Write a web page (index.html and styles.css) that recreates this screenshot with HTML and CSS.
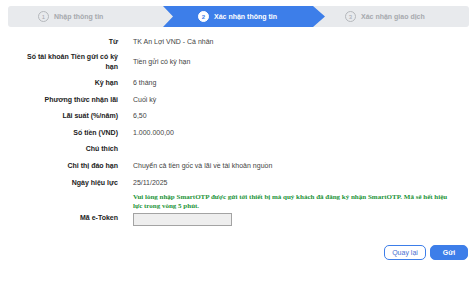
FILE: index.html
```html
<!DOCTYPE html>
<html lang="vi">
<head>
    <meta charset="UTF-8">
    <meta name="viewport" content="width=device-width, initial-scale=1.0">
    <title>Xác nhận thông tin</title>
    <link rel="stylesheet" href="styles.css">
</head>
<body>
    <div class="steps">
        <div class="step step-1">
            <span class="num">1</span>
            <span class="step-label">Nhập thông tin</span>
        </div>
        <div class="step step-2 active">
            <span class="num">2</span>
            <span class="step-label">Xác nhận thông tin</span>
        </div>
        <div class="step step-3">
            <span class="num">3</span>
            <span class="step-label">Xác nhận giao dịch</span>
        </div>
    </div>

    <div class="form">
        <div class="label">Từ</div>
        <div class="value">TK An Lợi VND - Cá nhân</div>

        <div class="label label-wrap">Số tài khoản Tiền gửi có kỳ hạn</div>
        <div class="value">Tiền gửi có kỳ hạn</div>

        <div class="label">Kỳ hạn</div>
        <div class="value">6 tháng</div>

        <div class="label">Phương thức nhận lãi</div>
        <div class="value">Cuối kỳ</div>

        <div class="label">Lãi suất (%/năm)</div>
        <div class="value">6,50</div>

        <div class="label">Số tiền (VND)</div>
        <div class="value">1.000.000,00</div>

        <div class="label">Chú thích</div>
        <div class="value"></div>

        <div class="label">Chỉ thị đáo hạn</div>
        <div class="value">Chuyển cả tiền gốc và lãi về tài khoản nguồn</div>

        <div class="label">Ngày hiệu lực</div>
        <div class="value">25/11/2025</div>

        <div class="label"></div>
        <div class="value notice">Vui lòng nhập SmartOTP được gửi tới thiết bị mà quý khách đã đăng ký nhận SmartOTP. Mã sẽ hết hiệu lực trong vòng 5 phút.</div>

        <div class="label token-label">Mã e-Token</div>
        <div class="value token-value"><input type="text" class="token-input"></div>
    </div>

    <div class="actions">
        <button class="btn btn-outline">Quay lại</button>
        <button class="btn btn-primary">Gửi</button>
    </div>
</body>
</html>
```

FILE: styles.css
```css
body {
    margin: 0;
    padding: 6px 6px 0 8px;
    font-family: "Liberation Sans", Arial, sans-serif;
    font-size: 7px;
    color: #333;
    background-color: #fff;
}
.steps {
    display: flex;
    height: 21px;
    background-color: #e8eaed;
    border-radius: 3px;
    overflow: hidden;
}
.step {
    display: flex;
    align-items: center;
    gap: 5px;
    color: #a6a9ad;
    font-weight: bold;
}
.step-1 {
    width: 155px;
    padding-left: 30px;
    box-sizing: border-box;
}
.step-2 {
    width: 162px;
    padding-left: 35px;
    box-sizing: border-box;
}
.step-3 {
    flex: 1;
    padding-left: 20px;
}
.active {
    background-color: #3d7ee9;
    color: #fff;
    clip-path: polygon(0 0, calc(100% - 12px) 0, 100% 50%, calc(100% - 12px) 100%, 0 100%, 10px 50%);
}
.num {
    width: 9px;
    height: 9px;
    border: 1px solid #b5b8bc;
    border-radius: 50%;
    display: flex;
    align-items: center;
    justify-content: center;
    font-size: 6px;
    font-weight: normal;
}
.active .num {
    background-color: #fff;
    border-color: #fff;
    color: #3d7ee9;
    font-weight: bold;
}
.form {
    display: grid;
    grid-template-columns: 110px 325px;
    grid-auto-rows: minmax(16.6px, auto);
    column-gap: 15px;
    align-items: center;
    margin-top: 6.7px;
    line-height: 10px;
}
.label {
    text-align: right;
    font-weight: bold;
    color: #222;
}
.label-wrap {
    padding: 2.2px 0 2.2px 8px;
}
.value {
    color: #444;
}
.notice {
    align-self: start;
    padding-top: 2.6px;
    font-family: "Liberation Serif", "Times New Roman", serif;
    font-weight: bold;
    color: #1c9438;
    line-height: 9px;
}
.token-value {
    display: flex;
}
.token-input {
    width: 99px;
    height: 13px;
    box-sizing: border-box;
    margin: 0;
    border: 1px solid #a3a3a3;
    background-color: #eeeeee;
    padding: 0 3px;
    font-size: 7px;
}
.form .token-label,
.form .token-value {
    min-height: 13px;
}
.actions {
    display: flex;
    justify-content: flex-end;
    gap: 4px;
    margin-top: 17px;
    padding-right: 1px;
}
.btn {
    height: 15px;
    border-radius: 5px;
    font-family: "Liberation Sans", Arial, sans-serif;
    font-size: 7px;
    padding: 0;
    cursor: pointer;
    border: 1px solid #3d7ee9;
}
.btn-outline {
    width: 42px;
    background-color: #fff;
    color: #4b6fd1;
}
.btn-primary {
    width: 38px;
    background-color: #3d7ee9;
    color: #fff;
    font-weight: bold;
}
```
